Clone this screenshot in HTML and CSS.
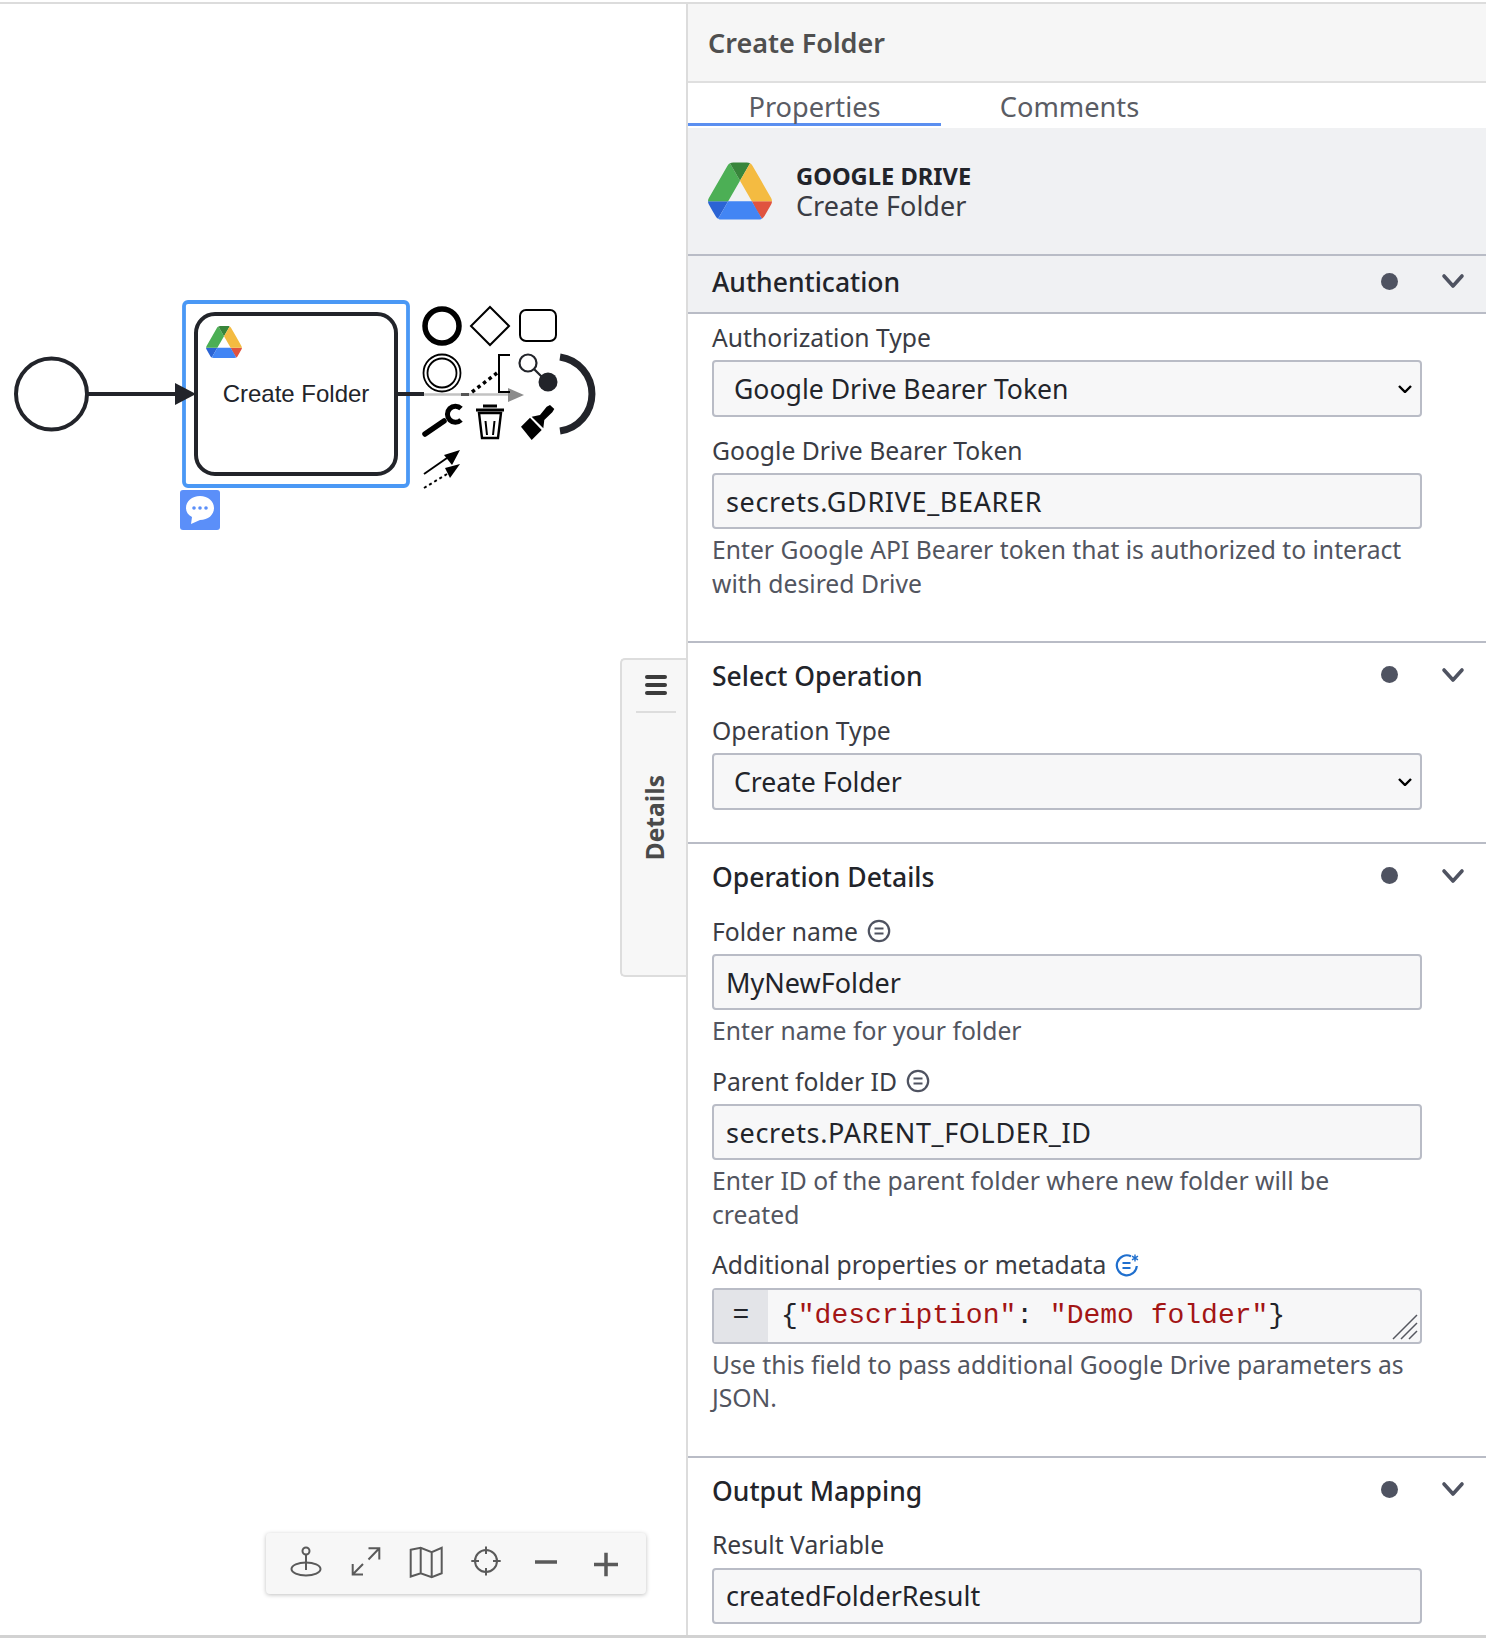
FILE: index.html
```html
<!DOCTYPE html>
<html lang="en">
<head>
  <meta charset="UTF-8">
  <meta name="viewport" content="width=device-width, initial-scale=1.0">
  <title>Create Folder</title>
  <link rel="stylesheet" href="styles.css">
</head>
<body>
  <svg class="defs" width="0" height="0">
    <symbol id="gdrive" viewBox="0 0 87.3 78">
      <path d="m6.6 66.85 3.85 6.65c.8 1.4 1.95 2.5 3.3 3.3l13.75-23.8h-27.5c0 1.55.4 3.1 1.2 4.5z" fill="#2b64d4"/>
      <path d="m43.65 25-13.75-23.8c-1.35.8-2.5 1.9-3.3 3.3l-25.4 44a9.06 9.06 0 0 0 -1.2 4.5h27.5z" fill="#4caf55"/>
      <path d="m73.55 76.8c1.35-.8 2.5-1.9 3.3-3.3l1.6-2.75 7.65-13.25c.8-1.4 1.2-2.95 1.2-4.5h-27.502l5.852 11.5z" fill="#e0533f"/>
      <path d="m43.65 25 13.75-23.8c-1.35-.8-2.9-1.2-4.5-1.2h-18.5c-1.6 0-3.15.45-4.5 1.2z" fill="#38853b"/>
      <path d="m59.8 53h-32.3l-13.75 23.8c1.35.8 2.9 1.2 4.5 1.2h50.8c1.6 0 3.15-.45 4.5-1.2z" fill="#4285f4"/>
      <path d="m73.4 26.5-12.7-22c-.8-1.4-1.95-2.5-3.3-3.3l-13.75 23.8 16.15 28h27.45c0-1.55-.4-3.1-1.2-4.5z" fill="#f4bb41"/>
    </symbol>
    <symbol id="chevron" viewBox="0 0 24 16">
      <path d="M3 3l9 10 9-10" fill="none" stroke="#4f5361" stroke-width="3.600" stroke-linecap="round" stroke-linejoin="round"/>
    </symbol>
    <symbol id="feel" viewBox="0 0 24 24">
      <circle cx="12" cy="12" r="10.2" fill="none" stroke="#4f5361" stroke-width="2.200"/>
      <path d="M7.5 9.5h9M7.5 14.5h9" stroke="#4f5361" stroke-width="2.200"/>
    </symbol>
  </svg>

  <div class="app">
    <!-- Diagram -->
    <div class="canvas">
      <svg class="diagram" width="686" height="1631" viewBox="0 4 686 1631">
        <circle cx="51.500" cy="394" r="35.500" fill="#fff" stroke="#22242a" stroke-width="4"/>
        <path d="M88 394H176" stroke="#22242a" stroke-width="4"/>

        <rect x="184" y="302" width="224" height="184" rx="4" fill="none" stroke="#4a98f5" stroke-width="3.800"/>
        <rect x="196" y="314" width="200" height="160" rx="19" fill="#fff" stroke="#22242a" stroke-width="4"/>
        <path d="M175 383L196 394L175 405Z" fill="#22242a"/>
        <use href="#gdrive" x="206" y="326" width="36" height="32"/>
        <text class="task-label" x="296" y="402" text-anchor="middle">Create Folder</text>

        <path d="M398 394H424" stroke="#22242a" stroke-width="4"/>
        <path d="M424 394.500H512" stroke="#c2c2c2" stroke-width="2.500"/>
        <path d="M461 394.500H469" stroke="#555" stroke-width="3"/>
        <path d="M508 388L524 395L508 402Z" fill="#8c8c8c"/>

        <!-- context pad -->
        <circle cx="442" cy="326" r="17" fill="none" stroke="#000" stroke-width="5.500"/>
        <path d="M490 307L509 326L490 345L471 326Z" fill="none" stroke="#000" stroke-width="2"/>
        <rect x="520" y="310" width="36" height="31" rx="6" fill="none" stroke="#000" stroke-width="2"/>
        <circle cx="442" cy="373" r="18.500" fill="#fff" stroke="#000" stroke-width="1.800"/>
        <circle cx="442" cy="373" r="14.500" fill="none" stroke="#000" stroke-width="1.800"/>
        <path d="M472 392L497 373" stroke="#000" stroke-width="3.500" stroke-dasharray="3.500 3.500"/>
        <path d="M510 355H499V392H510" fill="none" stroke="#000" stroke-width="2"/>
        <circle cx="528" cy="363" r="8.500" fill="#fff" stroke="#22242a" stroke-width="2.200"/>
        <path d="M534 369L543 378" stroke="#22242a" stroke-width="2.200"/>
        <circle cx="548" cy="382" r="9.500" fill="#22242a"/>
        <path d="M560 357A37.400 37.400 0 0 1 560 431" fill="none" stroke="#22242a" stroke-width="7"/>

        <path d="M425 434L444 421" stroke="#000" stroke-width="5.500" stroke-linecap="round"/>
        <path d="M461 408.500A8 8 0 1 0 461 420" fill="none" stroke="#000" stroke-width="5"/>
        <path d="M476 410H504M483 406H497" stroke="#000" stroke-width="3"/>
        <path d="M479 413H501L498 438H482Z" fill="none" stroke="#000" stroke-width="2.400"/>
        <path d="M485.500 421L487 435M494.500 421L493 435" stroke="#000" stroke-width="2"/>
        <path d="M521 426.700L530 417.700L541.700 430L531.700 440Z" fill="#000"/>
        <path d="M531.700 416.700L540 415L546.700 406.700L550 405L554.300 409L552.300 412.300L544.300 420L543.300 428.300Z" fill="#000"/>

        <path d="M424 474L447 458" stroke="#000" stroke-width="2"/>
        <path d="M460 450L444 455L452 465Z" fill="#000"/>
        <path d="M424 488L447 474" stroke="#000" stroke-width="2" stroke-dasharray="3 3"/>
        <path d="M460 464L445 468L450 478Z" fill="#000"/>

        <!-- comment badge -->
        <rect x="180" y="490" width="40" height="40" rx="3" fill="#5b8ff9"/>
        <path d="M200 496C208 496 214 501 214 508C214 515 208 520 200 520L191 524L192 517C188 515 186 512 186 508C186 501 192 496 200 496Z" fill="#fff"/>
        <circle cx="194" cy="508" r="1.800" fill="#5b8ff9"/>
        <circle cx="200" cy="508" r="1.800" fill="#5b8ff9"/>
        <circle cx="206" cy="508" r="1.800" fill="#5b8ff9"/>
      </svg>

      <!-- Collapsed details tab -->
      <div class="details-tab">
        <div class="details-menu">
          <span></span><span></span><span></span>
        </div>
        <div class="details-text">Details</div>
      </div>

      <!-- Map controls -->
      <div class="toolbar">
        <svg class="tool" viewBox="0 0 40 40">
          <circle cx="20" cy="7" r="3.500"/>
          <ellipse cx="20" cy="25" rx="14.500" ry="6.500"/>
          <path d="M20 10.500V26"/>
        </svg>
        <svg class="tool" viewBox="0 0 40 40">
          <path d="M17 30.500H6.700V20M6.700 30.500L17 20M22.500 4.300H33.300V15.500M33.300 4.300L22.500 15.500"/>
        </svg>
        <svg class="tool" viewBox="0 0 40 40">
          <path d="M4.700 5.800L14.700 3.800L25.700 8.200L35.700 3.800V29.200L25.700 33.200L14.700 29.200L4.700 32.500ZM14.700 3.800V29.200M25.700 8.200V33.200"/>
        </svg>
        <svg class="tool" viewBox="0 0 40 40">
          <circle cx="20" cy="17" r="11"/>
          <path d="M20 2.500V10M20 24V31.500M5.300 17H13M27 17H34.700"/>
        </svg>
        <svg class="tool tool-bold" viewBox="0 0 40 40">
          <path d="M9 18H31"/>
        </svg>
        <svg class="tool tool-bold" viewBox="0 0 40 40">
          <path d="M8 20.500H32M20 8.800V32.200"/>
        </svg>
      </div>
    </div>

    <!-- Properties panel -->
    <div class="panel">
      <div class="panel-title">Create Folder</div>

      <div class="tabs">
        <div class="tab active">Properties</div>
        <div class="tab">Comments</div>
      </div>

      <div class="connector">
        <svg class="connector-logo" viewBox="0 0 64 58"><use href="#gdrive" width="64" height="58"/></svg>
        <div>
          <div class="connector-name">GOOGLE DRIVE</div>
          <div class="connector-action">Create Folder</div>
        </div>
      </div>

      <div class="section-head section-head-first">
        <span class="section-title">Authentication</span>
        <span class="dot"></span>
        <svg class="chevron"><use href="#chevron"/></svg>
      </div>
      <div class="section-body section-body-first">
        <div class="field">
          <label class="label">Authorization Type</label>
          <div class="select-wrap">
            <select class="control select"><option>Google Drive Bearer Token</option></select>
            <svg class="select-arrow" viewBox="0 0 14 8"><path d="M1 1l6 6 6-6"/></svg>
          </div>
        </div>
        <div class="field">
          <label class="label">Google Drive Bearer Token</label>
          <input class="control input input-caps" type="text" value="secrets.GDRIVE_BEARER">
          <div class="help">Enter Google API Bearer token that is authorized to interact with desired Drive</div>
        </div>
      </div>

      <div class="section-head">
        <span class="section-title">Select Operation</span>
        <span class="dot"></span>
        <svg class="chevron"><use href="#chevron"/></svg>
      </div>
      <div class="section-body">
        <div class="field">
          <label class="label">Operation Type</label>
          <div class="select-wrap">
            <select class="control select"><option>Create Folder</option></select>
            <svg class="select-arrow" viewBox="0 0 14 8"><path d="M1 1l6 6 6-6"/></svg>
          </div>
        </div>
      </div>

      <div class="section-head">
        <span class="section-title">Operation Details</span>
        <span class="dot"></span>
        <svg class="chevron"><use href="#chevron"/></svg>
      </div>
      <div class="section-body">
        <div class="field">
          <label class="label">Folder name <svg class="feel-icon"><use href="#feel"/></svg></label>
          <input class="control input" type="text" value="MyNewFolder">
          <div class="help">Enter name for your folder</div>
        </div>
        <div class="field">
          <label class="label">Parent folder ID <svg class="feel-icon"><use href="#feel"/></svg></label>
          <input class="control input input-caps" type="text" value="secrets.PARENT_FOLDER_ID">
          <div class="help">Enter ID of the parent folder where new folder will be created</div>
        </div>
        <div class="field">
          <label class="label">Additional properties or metadata
            <svg class="feel-icon" viewBox="0 0 24 24">
              <path d="M16 3.200A10 10 0 1 0 21.800 13" fill="none" stroke="#1f6fce" stroke-width="2.200"/>
              <path d="M7.500 10h8M7.500 15h8" stroke="#1f6fce" stroke-width="2.200"/>
              <path d="M20 1.500v7M17 3.200l6 3.600M23 3.200l-6 3.600" stroke="#1f6fce" stroke-width="1.400"/>
            </svg>
          </label>
          <div class="control code">
            <span class="code-prefix">=</span>
            <span class="code-text">{<span class="code-string">"description"</span>: <span class="code-string">"Demo folder"</span>}</span>
            <svg class="code-grip" viewBox="0 0 26 26">
              <path d="M1 25L25 1M9 25L25 9M17 25L25 17" stroke="#55575f" stroke-width="1.500"/>
            </svg>
          </div>
          <div class="help">Use this field to pass additional Google Drive parameters as JSON.</div>
        </div>
      </div>

      <div class="section-head">
        <span class="section-title">Output Mapping</span>
        <span class="dot"></span>
        <svg class="chevron"><use href="#chevron"/></svg>
      </div>
      <div class="section-body">
        <div class="field">
          <label class="label">Result Variable</label>
          <input class="control input" type="text" value="createdFolderResult">
        </div>
      </div>
    </div>
  </div>
</body>
</html>
```

FILE: styles.css
```css
* {
  box-sizing: border-box;
}

html, body {
  height: 100%;
}

body {
  margin: 0;
  padding-top: 2px;
  background-color: #fff;
  font-family: "Noto Sans", Arial, sans-serif;
  color: #22242a;
  overflow: hidden;
}

.defs {
  position: absolute;
}

.app {
  display: flex;
  height: 1636px;
  border-top: 2px solid #dcdcdc;
  border-bottom: 3px solid #d2d2d2;
  overflow: hidden;
}

/* Diagram */
.canvas {
  position: relative;
  flex: 0 0 686px;
  background-color: #fff;
}

.diagram {
  display: block;
}

.task-label {
  font-family: "Liberation Sans", Arial, sans-serif;
  font-size: 24px;
  fill: #22242a;
}

.details-tab {
  position: absolute;
  top: 654px;
  right: 0;
  width: 66px;
  height: 319px;
  padding: 15px 10px 0 14px;
  background-color: #f7f7f7;
  border: 2px solid #ddd;
  border-right: none;
  border-radius: 5px 0 0 5px;
}

.details-menu {
  display: flex;
  flex-direction: column;
  gap: 4px;
  align-items: center;
  padding-bottom: 16px;
  border-bottom: 2px solid #ddd;
}

.details-menu span {
  width: 22px;
  height: 4px;
  border-radius: 2px;
  background-color: #3c3c3c;
}

.details-text {
  margin-top: 62px;
  margin-left: -1px;
  writing-mode: vertical-rl;
  transform: rotate(180deg);
  width: 40px;
  line-height: 40px;
  font-family: "Open Sans", Arial, sans-serif;
  font-size: 24.600px;
  font-weight: 700;
  color: #4a4a4a;
}

.toolbar {
  position: absolute;
  left: 266px;
  top: 1529px;
  display: flex;
  align-items: center;
  padding: 0 10px;
  width: 380px;
  height: 61px;
  background-color: #f7f7f7;
  border-radius: 4px;
  box-shadow: 0 1px 4px rgba(0, 0, 0, 0.25);
}

.tool {
  flex: 0 0 40px;
  width: 40px;
  height: 40px;
  margin: 0 10px;
  fill: none;
  stroke: #5a5a5a;
  stroke-width: 2;
}

.tool-bold {
  stroke-width: 3.5;
}

/* Panel */
.panel {
  flex: 1;
  min-width: 0;
  border-left: 2px solid #dcdcdc;
  background-color: #fff;
}

.panel-title {
  height: 79px;
  padding: 0 20px;
  background-color: #f6f6f6;
  border-bottom: 2px solid #dfdfdf;
  font-size: 27px;
  font-weight: 600;
  line-height: 77px;
  color: #4f4f4f;
}

.tabs {
  display: grid;
  grid-template-columns: 253px 257px;
  height: 45px;
}

.tab {
  height: 43px;
  line-height: 47px;
  text-align: center;
  font-size: 27.200px;
  color: #5a5c64;
}

.tab.active {
  border-bottom: 3px solid #5b8ff0;
}

.connector {
  display: flex;
  align-items: center;
  gap: 24px;
  height: 126px;
  padding: 0 20px;
  background-color: #f0f1f3;
}

.connector-logo {
  flex: 0 0 64px;
  width: 64px;
  height: 58px;
}

.connector-name {
  font-size: 23.700px;
  font-weight: 700;
  line-height: 30px;
}

.connector-action {
  font-size: 27px;
  line-height: 30px;
  color: #3a3c44;
}

.section-head {
  display: flex;
  align-items: center;
  height: 68px;
  padding: 0 21px 0 24px;
  border-top: 2px solid #b9bcc6;
}

.section-head-first {
  height: 60px;
  padding-bottom: 4px;
  background-color: #f0f1f3;
  border-bottom: 2px solid #b9bcc6;
}

.section-title {
  flex: 1;
  font-size: 26.500px;
  font-weight: 500;
}

.dot {
  width: 17px;
  height: 17px;
  margin: 0 43px 3px 0;
  border-radius: 50%;
  background-color: #4f5361;
}

.section-head-first .dot {
  margin-bottom: 2px;
}

.chevron {
  width: 24px;
  height: 16px;
  margin-bottom: 3px;
}

.section-head-first .chevron {
  margin-bottom: 2px;
}

.section-body {
  padding: 4px 64px 16px 24px;
}

.section-body-first {
  padding-top: 6px;
}

.field {
  margin-bottom: 16px;
}

.field:last-child .help {
  padding-bottom: 9px;
}

.label {
  display: flex;
  align-items: center;
  gap: 9px;
  height: 34px;
  margin-bottom: 6px;
  font-size: 24.700px;
  color: #3a3c44;
}

.feel-icon {
  width: 24px;
  height: 24px;
}

.control {
  display: block;
  width: 100%;
  height: 56px;
  background-color: #f7f7f8;
  border: 2px solid #b9bcc6;
  border-radius: 4px;
  font-family: "Noto Sans", Arial, sans-serif;
  font-size: 27px;
  color: #22242a;
}

.input {
  padding: 0 12px;
}

.input-caps {
  letter-spacing: 0.65px;
}

.select-wrap {
  position: relative;
}

.select {
  height: 57px;
  padding: 0 8px 0 20px;
  appearance: none;
  font-size: 26.600px;
}

.select-arrow {
  position: absolute;
  right: 10px;
  top: 25px;
  width: 14px;
  height: 8px;
  fill: none;
  stroke: #000;
  stroke-width: 2.400;
}

.help {
  margin: 4px 0 1.500px;
  font-size: 24.700px;
  line-height: 33.700px;
  color: #52555f;
}

.code {
  position: relative;
  display: flex;
  align-items: center;
  font-family: "Liberation Mono", monospace;
  font-size: 28px;
}

.code-prefix {
  flex: 0 0 54px;
  align-self: stretch;
  line-height: 52px;
  text-align: center;
  background-color: #e3e4e8;
}

.code-text {
  margin-left: 13px;
  white-space: pre;
}

.code-string {
  color: #a31515;
}

.code-grip {
  position: absolute;
  right: 2px;
  bottom: 2px;
  width: 26px;
  height: 26px;
}
```
